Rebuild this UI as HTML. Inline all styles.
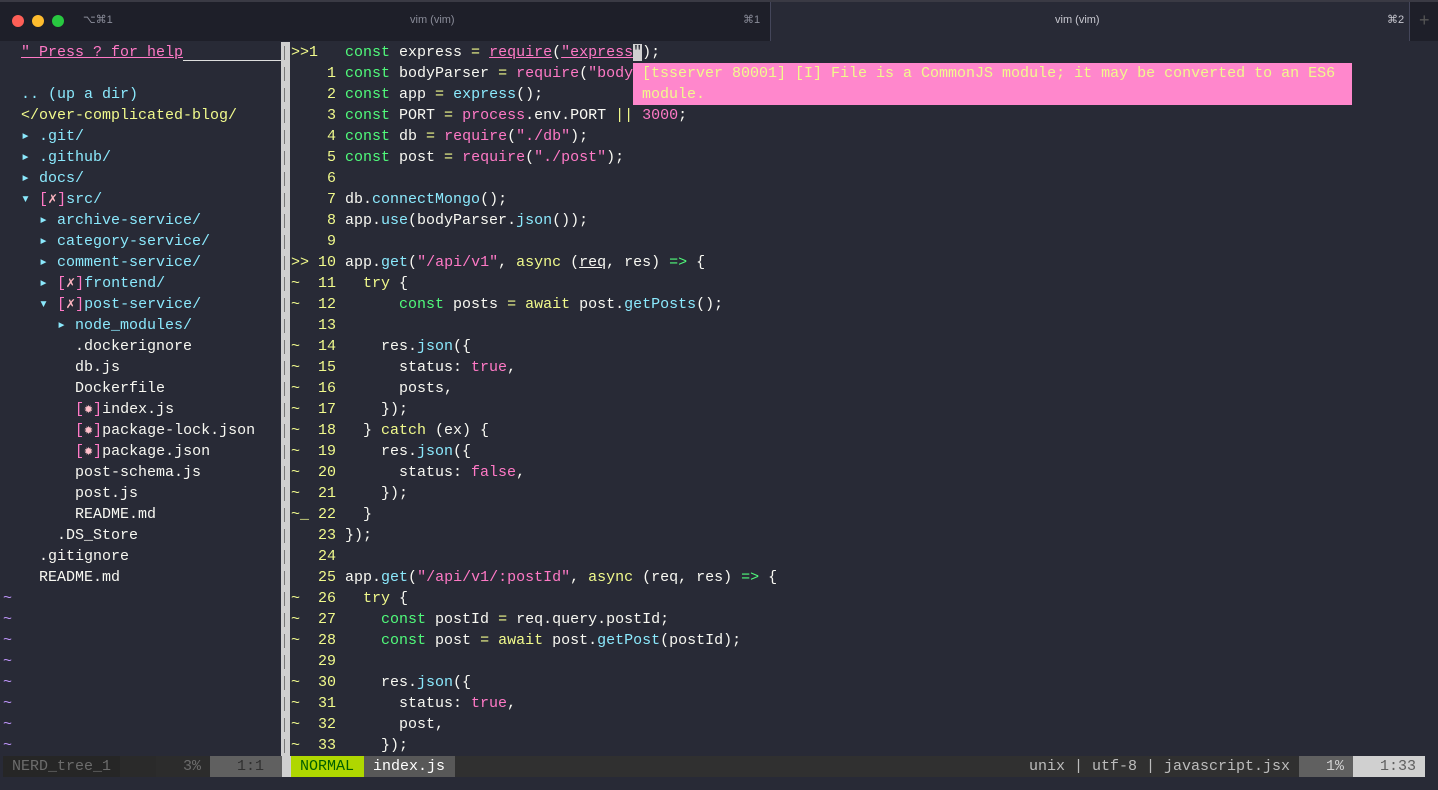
<!DOCTYPE html>
<html><head><meta charset="utf-8"><style>
*{margin:0;padding:0;box-sizing:border-box}
body{width:1438px;height:790px;background:#282a36;overflow:hidden;position:relative;font-family:"Liberation Mono","DejaVu Sans Mono",monospace;font-size:15px;color:#f8f8f2}
.tb{position:absolute;left:0;top:0;width:1438px;height:41px;background:#1e1f29;border-top:2px solid #3a3a44}
.tab2{position:absolute;left:770px;top:2px;width:640px;height:39px;background:#282a36;border-left:1px solid #44465a;border-right:1px solid #44465a}
.tt{position:absolute;font-family:"Liberation Sans",sans-serif;font-size:11px;color:#8a8c99}
.dot{position:absolute;top:15px;width:12px;height:12px;border-radius:50%}
.r{position:absolute;height:21px;line-height:21px;white-space:pre}
.k{color:#50fa7b}.s{color:#ff79c6}.f{color:#8be9fd}.y{color:#f1fa8c}.n{color:#f1fa8c}.p{color:#bd93f9}.g{color:#8a8a8a}.u{text-decoration:underline}
.sep{position:absolute;left:281px;top:42px;width:9px;height:714px;background:#d0d0d0}
.sep::after{content:"";position:absolute;left:3px;top:0;width:1px;height:714px;background:repeating-linear-gradient(#777 0 14px,transparent 14px 21px);background-position:0 4px}
.pop{position:absolute;left:633px;top:63px;width:719px;height:42px;background:#ff87cc;color:#f1fa8c}
.st{position:absolute;top:756px;height:21px;line-height:21px;white-space:pre}
</style></head><body>
<div class="tb"></div>
<div class="tab2"></div>
<div class="dot" style="left:12px;background:#fe5f57"></div>
<div class="dot" style="left:32px;background:#febc2e"></div>
<div class="dot" style="left:52px;background:#28c840"></div>
<div class="tt" style="left:83px;top:13px">⌥⌘1</div>
<div class="tt" style="left:410px;top:14px">vim (vim)</div>
<div class="tt" style="left:743px;top:13px">⌘1</div>
<div class="tt" style="left:1055px;top:14px;color:#c8c8d0">vim (vim)</div>
<div class="tt" style="left:1387px;top:13px;color:#c8c8d0">⌘2</div>
<div class="tt" style="left:1419px;top:10px;font-size:18px;color:#555">+</div>

<div class="r s" style="left:21px;top:42px"><span class="u">" Press ? for help</span></div>
<div style="position:absolute;left:183px;top:60px;width:98px;height:1px;background:#ddd"></div>
<div class="r f" style="left:21px;top:84px">.. (up a dir)</div>
<div class="r y" style="left:21px;top:105px">&lt;/over-complicated-blog/</div>
<div class="r f" style="left:21px;top:126px">▸ .git/</div>
<div class="r f" style="left:21px;top:147px">▸ .github/</div>
<div class="r f" style="left:21px;top:168px">▸ docs/</div>
<div class="r f" style="left:21px;top:189px">▾ <span class="s">[<span style="color:#ffb6c1">✗</span>]</span>src/</div>
<div class="r f" style="left:39px;top:210px">▸ archive-service/</div>
<div class="r f" style="left:39px;top:231px">▸ category-service/</div>
<div class="r f" style="left:39px;top:252px">▸ comment-service/</div>
<div class="r f" style="left:39px;top:273px">▸ <span class="s">[<span style="color:#ffb6c1">✗</span>]</span>frontend/</div>
<div class="r f" style="left:39px;top:294px">▾ <span class="s">[<span style="color:#ffb6c1">✗</span>]</span>post-service/</div>
<div class="r f" style="left:57px;top:315px">▸ node_modules/</div>
<div class="r" style="left:75px;top:336px">.dockerignore</div>
<div class="r" style="left:75px;top:357px">db.js</div>
<div class="r" style="left:75px;top:378px">Dockerfile</div>
<div class="r" style="left:75px;top:399px"><span class="s">[<span style="color:#ffc0cb">✹</span>]</span>index.js</div>
<div class="r" style="left:75px;top:420px"><span class="s">[<span style="color:#ffc0cb">✹</span>]</span>package-lock.json</div>
<div class="r" style="left:75px;top:441px"><span class="s">[<span style="color:#ffc0cb">✹</span>]</span>package.json</div>
<div class="r" style="left:75px;top:462px">post-schema.js</div>
<div class="r" style="left:75px;top:483px">post.js</div>
<div class="r" style="left:75px;top:504px">README.md</div>
<div class="r" style="left:57px;top:525px">.DS_Store</div>
<div class="r" style="left:39px;top:546px">.gitignore</div>
<div class="r" style="left:39px;top:567px">README.md</div>
<div class="r p" style="left:3px;top:588px">~</div>
<div class="r p" style="left:3px;top:609px">~</div>
<div class="r p" style="left:3px;top:630px">~</div>
<div class="r p" style="left:3px;top:651px">~</div>
<div class="r p" style="left:3px;top:672px">~</div>
<div class="r p" style="left:3px;top:693px">~</div>
<div class="r p" style="left:3px;top:714px">~</div>
<div class="r p" style="left:3px;top:735px">~</div>

<div class="sep"></div>

<div class="r" style="left:291px;top:42px"><span class="n">&gt;&gt;1   </span><span class="k">const</span> express <span class="y">=</span> <span class="s u">require</span>(<span class="s u">"express</span><span style="background:#d0d0d0;color:#282a36">"</span>);</div>
<div class="r" style="left:291px;top:63px"><span class="n">    1 </span><span class="k">const</span> bodyParser <span class="y">=</span> <span class="s">require</span>(<span class="s">"body</span></div>
<div class="r" style="left:291px;top:84px"><span class="n">    2 </span><span class="k">const</span> app <span class="y">=</span> <span class="f">express</span>();</div>
<div class="r" style="left:291px;top:105px"><span class="n">    3 </span><span class="k">const</span> PORT <span class="y">=</span> <span class="s">process</span>.env.PORT <span class="y">||</span> <span class="s">3000</span>;</div>
<div class="r" style="left:291px;top:126px"><span class="n">    4 </span><span class="k">const</span> db <span class="y">=</span> <span class="s">require</span>(<span class="s">"./db"</span>);</div>
<div class="r" style="left:291px;top:147px"><span class="n">    5 </span><span class="k">const</span> post <span class="y">=</span> <span class="s">require</span>(<span class="s">"./post"</span>);</div>
<div class="r" style="left:291px;top:168px"><span class="n">    6 </span></div>
<div class="r" style="left:291px;top:189px"><span class="n">    7 </span>db.<span class="f">connectMongo</span>();</div>
<div class="r" style="left:291px;top:210px"><span class="n">    8 </span>app.<span class="f">use</span>(bodyParser.<span class="f">json</span>());</div>
<div class="r" style="left:291px;top:231px"><span class="n">    9 </span></div>
<div class="r" style="left:291px;top:252px"><span class="n">&gt;&gt; 10 </span>app.<span class="f">get</span>(<span class="s">"/api/v1"</span>, <span class="y">async</span> (<span class="u">req</span>, res) <span class="k">=&gt;</span> {</div>
<div class="r" style="left:291px;top:273px"><span class="n">~  11 </span>  <span class="y">try</span> {</div>
<div class="r" style="left:291px;top:294px"><span class="n">~  12 </span>      <span class="k">const</span> posts <span class="y">=</span> <span class="y">await</span> post.<span class="f">getPosts</span>();</div>
<div class="r" style="left:291px;top:315px"><span class="n">   13 </span></div>
<div class="r" style="left:291px;top:336px"><span class="n">~  14 </span>    res.<span class="f">json</span>({</div>
<div class="r" style="left:291px;top:357px"><span class="n">~  15 </span>      status: <span class="s">true</span>,</div>
<div class="r" style="left:291px;top:378px"><span class="n">~  16 </span>      posts,</div>
<div class="r" style="left:291px;top:399px"><span class="n">~  17 </span>    });</div>
<div class="r" style="left:291px;top:420px"><span class="n">~  18 </span>  } <span class="y">catch</span> (ex) {</div>
<div class="r" style="left:291px;top:441px"><span class="n">~  19 </span>    res.<span class="f">json</span>({</div>
<div class="r" style="left:291px;top:462px"><span class="n">~  20 </span>      status: <span class="s">false</span>,</div>
<div class="r" style="left:291px;top:483px"><span class="n">~  21 </span>    });</div>
<div class="r" style="left:291px;top:504px"><span class="n">~_ 22 </span>  }</div>
<div class="r" style="left:291px;top:525px"><span class="n">   23 </span>});</div>
<div class="r" style="left:291px;top:546px"><span class="n">   24 </span></div>
<div class="r" style="left:291px;top:567px"><span class="n">   25 </span>app.<span class="f">get</span>(<span class="s">"/api/v1/:postId"</span>, <span class="y">async</span> (req, res) <span class="k">=&gt;</span> {</div>
<div class="r" style="left:291px;top:588px"><span class="n">~  26 </span>  <span class="y">try</span> {</div>
<div class="r" style="left:291px;top:609px"><span class="n">~  27 </span>    <span class="k">const</span> postId <span class="y">=</span> req.query.postId;</div>
<div class="r" style="left:291px;top:630px"><span class="n">~  28 </span>    <span class="k">const</span> post <span class="y">=</span> <span class="y">await</span> post.<span class="f">getPost</span>(postId);</div>
<div class="r" style="left:291px;top:651px"><span class="n">   29 </span></div>
<div class="r" style="left:291px;top:672px"><span class="n">~  30 </span>    res.<span class="f">json</span>({</div>
<div class="r" style="left:291px;top:693px"><span class="n">~  31 </span>      status: <span class="s">true</span>,</div>
<div class="r" style="left:291px;top:714px"><span class="n">~  32 </span>      post,</div>
<div class="r" style="left:291px;top:735px"><span class="n">~  33 </span>    });</div>

<div class="pop"><div class="r" style="left:9px;top:0">[tsserver 80001] [I] File is a CommonJS module; it may be converted to an ES6</div><div class="r" style="left:9px;top:21px">module.</div></div>

<div class="st" style="left:3px;width:1422px;background:#303030"></div>
<div class="st" style="left:3px;width:117px;background:#262626;color:#6c6c6c"> NERD_tree_1 </div>
<div class="st" style="left:120px;width:36px;background:#2a2a2a"></div>
<div class="st" style="left:156px;width:54px;background:#2c2c2c;color:#6c6c6c;text-align:right;padding-right:9px">3%</div>
<div class="st" style="left:210px;width:72px;background:#606060;color:#303030;text-align:right;padding-right:18px">1:1</div>
<div class="st" style="left:282px;width:9px;background:#d0d0d0"></div>
<div class="st" style="left:291px;width:73px;background:#afd700;color:#005f00;padding-left:9px">NORMAL</div>
<div class="st" style="left:364px;width:91px;background:#585858;color:#fff;padding-left:9px">index.js</div>
<div class="st" style="left:1029px;color:#bcbcbc">unix | utf-8 | javascript.jsx</div>
<div class="st" style="left:1299px;width:54px;background:#606060;color:#d0d0d0;text-align:right;padding-right:9px">1%</div>
<div class="st" style="left:1353px;width:72px;background:#d0d0d0;color:#606060;text-align:right;padding-right:9px">1:33</div>
</body></html>
